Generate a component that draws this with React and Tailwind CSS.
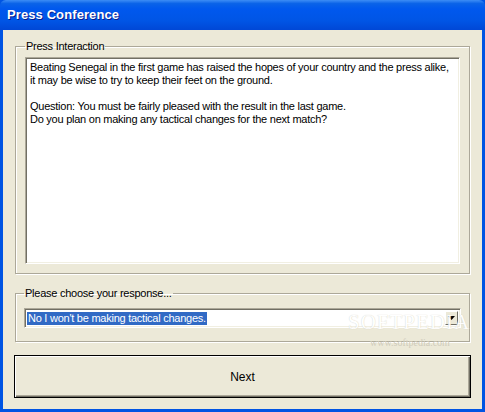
import React from "react";

export default function App() {
  const font = { fontFamily: '"Liberation Sans", Arial, sans-serif' };
  return (
    <div
      className="w-[485px] h-[412px] flex flex-col bg-[#0054E3] overflow-hidden relative"
      style={font}
    >
      {/* Title bar */}
      <div className="h-[30px] shrink-0 flex items-center pl-[7px] bg-[linear-gradient(180deg,#3D8DF5_0%,#0A63E8_12%,#0058EE_30%,#0055E5_70%,#0047D6_100%)] rounded-t-[6px]">
        <span className="text-white font-bold text-[13px] tracking-[0.1px] [text-shadow:1px_1px_0_#0A1E8C]">
          Press Conference
        </span>
      </div>

      {/* Body */}
      <div className="flex-1 mx-[3px] mb-[3px] bg-[#ECE9D8] flex flex-col px-[12px] pt-[10px] text-[11px] tracking-[-0.25px] text-black">
        {/* Group 1 */}
        <fieldset className="h-[234px] border border-[#ACA899] shadow-[inset_1px_1px_0_#fff,1px_1px_0_#fff] px-[9px]">
          <legend className="px-[1px] leading-[13px]">Press Interaction</legend>
          <div className="mt-[4px] h-[207px] bg-white border border-[#ACA899] border-b-white border-r-white shadow-[inset_1px_1px_0_#716F64,inset_-1px_-1px_0_#F1EFE2] px-[4px] pt-[3px] leading-[13px]">
            <div>Beating Senegal in the first game has raised the hopes of your country and the press alike,</div>
            <div>it may be wise to try to keep their feet on the ground.</div>
            <div className="h-[13px]"></div>
            <div>Question: You must be fairly pleased with the result in the last game.</div>
            <div>Do you plan on making any tactical changes for the next match?</div>
          </div>
        </fieldset>

        {/* Group 2 */}
        <fieldset className="mt-[13px] h-[55px] border border-[#ACA899] shadow-[inset_1px_1px_0_#fff,1px_1px_0_#fff] px-[8px]">
          <legend className="px-[1px] leading-[13px]">Please choose your response...</legend>
          <div className="mt-[8px] h-[20px] flex bg-white border border-[#ACA899] border-b-white border-r-white shadow-[inset_1px_1px_0_#716F64,inset_-1px_-1px_0_#F1EFE2] p-[2px]">
            <div className="flex-1 flex items-center">
              <span className="bg-[#316AC5] text-white px-[1px] leading-[13px]">
                No I won't be making tactical changes.
              </span>
            </div>
            <div className="w-[13px] bg-[#ECE9D8] border border-white border-r-[#716F64] border-b-[#716F64] flex items-center justify-center">
              <svg width="7" height="4" viewBox="0 0 7 4">
                <path d="M0 0H7L3.5 4Z" fill="#000" />
              </svg>
            </div>
          </div>
        </fieldset>

        {/* Next button */}
        <div className="mt-[13px] -mx-[1px]">
          <button className="w-full h-[43px] border border-black bg-[#ECE9D8] shadow-[inset_1px_1px_0_#fff,inset_-1px_-1px_0_#716F64,inset_-2px_-2px_0_#ACA899] text-[12px] tracking-normal text-black">
            Next
          </button>
        </div>
      </div>

      {/* Softpedia watermark */}
      <div className="absolute left-[348px] top-[307px] text-[21px] tracking-[1px] text-white [text-shadow:0_0_1px_#C8C4B4] opacity-90 pointer-events-none" style={{ fontFamily: '"Liberation Serif", serif' }}>
        SOFTPEDIA
      </div>
      <div className="absolute left-[370px] top-[335px] text-[10px] text-[#CFCBBB] pointer-events-none" style={{ fontFamily: '"Liberation Serif", serif' }}>
        www.softpedia.com
      </div>
    </div>
  );
}
